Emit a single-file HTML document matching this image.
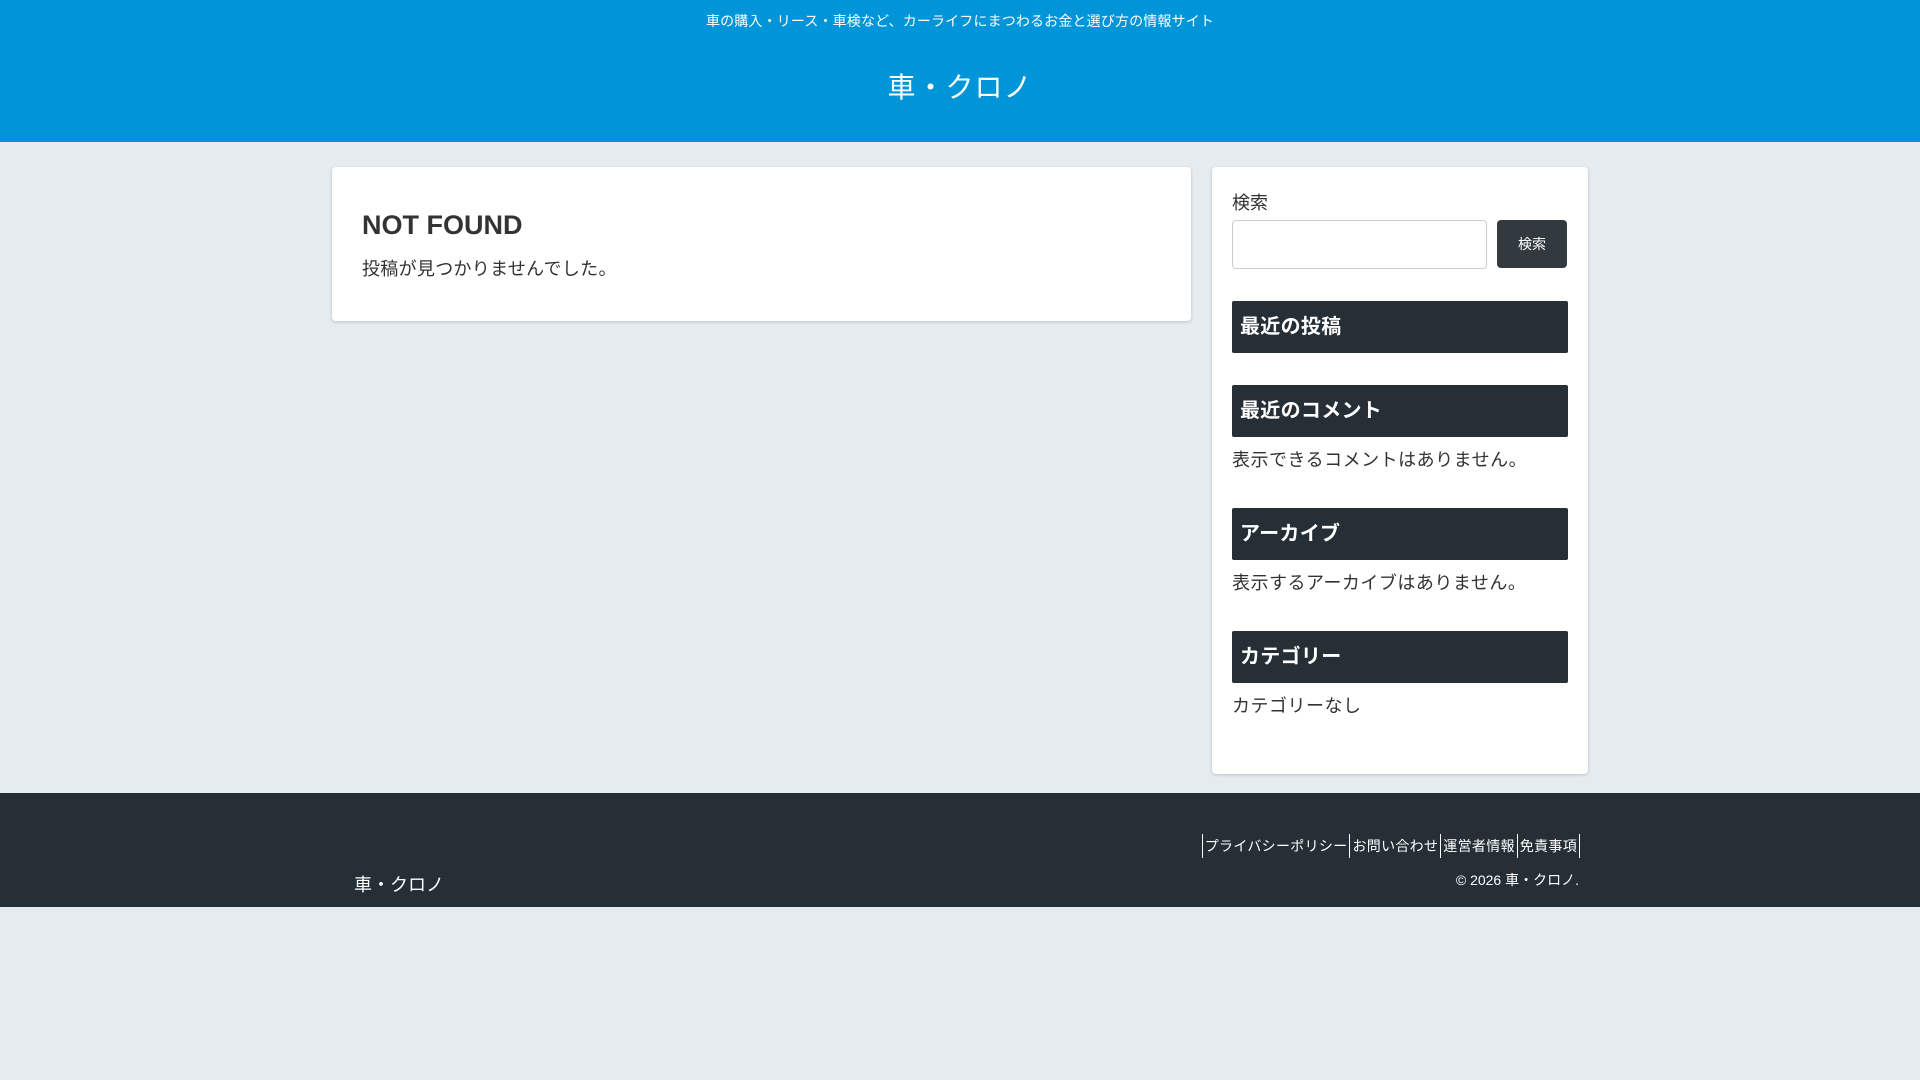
<!DOCTYPE html>
<html><head><meta charset="utf-8"><style>
*{box-sizing:border-box;margin:0;padding:0}
body{width:1920px;height:1080px;background:#e6ebef;font-family:"Liberation Sans","Noto Sans CJK JP",sans-serif;color:#333;position:relative;overflow:hidden}
.hdr{position:absolute;left:0;top:0;width:1920px;height:142px;background:#0095d9;color:#fff;text-align:center}
.tag{position:absolute;top:11px;width:100%;font-size:14px;letter-spacing:0.15px}
.ttl{position:absolute;top:66px;width:100%;font-size:28px;letter-spacing:1px}
.card{position:absolute;background:#fff;border-radius:4px;box-shadow:0 1px 3px rgba(0,0,0,.18)}
.main{left:332px;top:167px;width:859px;height:154px}
.main h1{position:absolute;left:30px;top:43px;font-size:27px;font-weight:bold}
.side{left:1212px;top:167px;width:376px;height:607px}
.lbl{position:absolute;left:20px;top:22px;font-size:18px}
.inp{position:absolute;left:20px;top:53px;width:255px;height:49px;border:1px solid #ccc;border-radius:4px}
.btn{position:absolute;left:285px;top:53px;width:70px;height:48px;background:#333a3f;border-radius:4px;color:#fff;font-size:14px;text-align:center;line-height:48px}
.h3{position:absolute;left:20px;width:336px;height:52px;background:#262f36;color:#fff;font-size:20px;font-weight:bold;line-height:52px;padding-left:8px;border-radius:2px;letter-spacing:0.3px}
.t{position:absolute;left:20px;font-size:18px;letter-spacing:0.5px}
.ftr{position:absolute;left:0;top:793px;width:1920px;height:114px;background:#262f36;color:#fff}
.links{position:absolute;right:340px;top:41px;font-size:14px;display:flex;border-left:1px solid #fff;letter-spacing:0.3px}
.links span{border-right:1px solid #fff;padding:2px 2px;line-height:20px}
.copy{position:absolute;right:341px;top:77px;font-size:14px}
.fn{position:absolute;left:354px;top:78px;font-size:18px}
</style></head><body>
<div class="hdr"><div class="tag">車の購入・リース・車検など、カーライフにまつわるお金と選び方の情報サイト</div><div class="ttl">車・クロノ</div></div>
<div class="card main"><h1>NOT FOUND</h1><div style="position:absolute;left:30px;top:88px;font-size:18px;letter-spacing:0.3px">投稿が見つかりませんでした。</div></div>
<div class="card side">
<div class="lbl">検索</div><div class="inp"></div><div class="btn">検索</div>
<div class="h3" style="top:134px">最近の投稿</div>
<div class="h3" style="top:218px">最近のコメント</div>
<div class="t" style="top:279px">表示できるコメントはありません。</div>
<div class="h3" style="top:341px">アーカイブ</div>
<div class="t" style="top:402px">表示するアーカイブはありません。</div>
<div class="h3" style="top:464px">カテゴリー</div>
<div class="t" style="top:525px">カテゴリーなし</div>
</div>
<div class="ftr">
<div class="links"><span>プライバシーポリシー</span><span>お問い合わせ</span><span>運営者情報</span><span>免責事項</span></div>
<div class="copy">© 2026 車・クロノ.</div>
<div class="fn">車・クロノ</div>
</div>
</body></html>
